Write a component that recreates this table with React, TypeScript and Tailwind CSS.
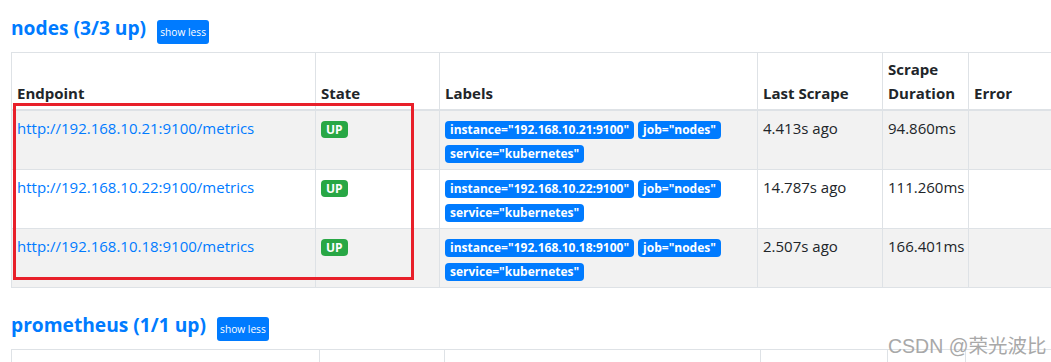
import React from "react";

const rows = [
  { ep: "http://192.168.10.21:9100/metrics", inst: "192.168.10.21:9100", last: "4.413s ago", dur: "94.860ms" },
  { ep: "http://192.168.10.22:9100/metrics", inst: "192.168.10.22:9100", last: "14.787s ago", dur: "111.260ms" },
  { ep: "http://192.168.10.18:9100/metrics", inst: "192.168.10.18:9100", last: "2.507s ago", dur: "166.401ms" },
];

function Badge({ children, green }: { children: React.ReactNode; green?: boolean }) {
  return (
    <span
      className={
        "inline-flex items-center rounded-[4px] px-[5px] text-[12px] font-bold leading-none text-white " +
        (green ? "h-[17px] bg-[#28a745]" : "h-[18px] bg-[#007bff]")
      }
    >
      {children}
    </span>
  );
}

function Heading({ title }: { title: string }) {
  return (
    <div className="flex h-[28px] items-start gap-[11px]">
      <h2 className="text-[19.2px] font-bold leading-[24px] text-[#007bff]">{title}</h2>
      <button className="mt-[4px] flex h-[24px] w-[52px] items-center justify-center rounded-[3px] bg-[#007bff] text-[10.2px] leading-none text-white">
        show less
      </button>
    </div>
  );
}

const th =
  "border border-b-2 border-[#dee2e6] px-[5px] py-[4px] text-left align-bottom text-[15px] font-bold leading-[24px]";
const td = "border border-[#dee2e6] px-[5px] py-[5px] align-top text-[15px] leading-[24px]";

function Header({ widths }: { widths: number[] }) {
  return (
    <>
      <colgroup>
        {widths.map((w, i) => (
          <col key={i} style={{ width: w }} />
        ))}
      </colgroup>
      <thead>
        <tr>
          <th className={th}>Endpoint</th>
          <th className={th}>State</th>
          <th className={th}>Labels</th>
          <th className={th}>Last Scrape</th>
          <th className={th}>Scrape Duration</th>
          <th className={th}>Error</th>
        </tr>
      </thead>
    </>
  );
}

export default function App() {
  return (
    <div className="relative h-[362px] w-[1051px] overflow-hidden bg-white font-['Open_Sans',sans-serif] text-[#212529]">
      <div className="pl-[11px] pt-[16px]">
        <Heading title="nodes (3/3 up)" />
        <table className="mt-[8px] w-[1100px] table-fixed border-collapse">
          <Header widths={[304, 124, 318, 125, 86, 143]} />
          <tbody>
            {rows.map((r, i) => (
              <tr key={i} className={i % 2 === 0 ? "bg-[#f2f2f2]" : "bg-white"}>
                <td className={td}>
                  <a className="text-[#007bff]">{r.ep}</a>
                </td>
                <td className={td}>
                  <div className="flex pt-[5px]">
                    <Badge green>UP</Badge>
                  </div>
                </td>
                <td className={td}>
                  <div className="flex flex-wrap gap-x-[4px] gap-y-[6px] pb-[1px] pt-[5px]">
                    <Badge>instance="{r.inst}"</Badge>
                    <Badge>job="nodes"</Badge>
                    <Badge>service="kubernetes"</Badge>
                  </div>
                </td>
                <td className={td}>{r.last}</td>
                <td className={td}>{r.dur}</td>
                <td className={td}></td>
              </tr>
            ))}
          </tbody>
        </table>

        <div className="mt-[25px]">
          <Heading title="prometheus (1/1 up)" />
        </div>
        <table className="mt-[8px] w-[1100px] table-fixed border-collapse">
          <Header widths={[308, 125, 316, 127, 78, 146]} />
        </table>
      </div>

      <div className="pointer-events-none absolute left-[13px] top-[103px] h-[177px] w-[401px] border-[3px] border-[#e8202a]" />

      <div className="pointer-events-none absolute left-[888px] top-[334px] whitespace-nowrap font-['Liberation_Sans','Noto_Sans_CJK_SC',sans-serif] text-[19.5px] leading-[24px] text-[#a8a8a8]">
        CSDN @荣光波比
      </div>
    </div>
  );
}
